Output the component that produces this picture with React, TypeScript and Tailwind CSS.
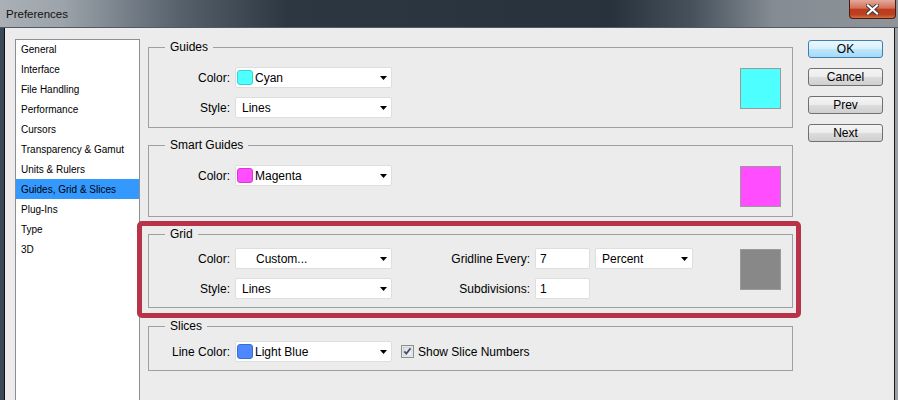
import React from "react";

const listItems = [
	"General",
	"Interface",
	"File Handling",
	"Performance",
	"Cursors",
	"Transparency & Gamut",
	"Units & Rulers",
	"Guides, Grid & Slices",
	"Plug-Ins",
	"Type",
	"3D",
];

function Arrow() {
	return (
		<svg width="7" height="4" viewBox="0 0 7 4" className="mr-[4px] ml-auto shrink-0">
			<path d="M0 0h7L3.5 4z" fill="#000" />
		</svg>
	);
}

function Select({
	className,
	swatch,
	text,
	indent,
}: {
	className: string;
	swatch?: string;
	text: string;
	indent?: boolean;
}) {
	return (
		<div
			className={`flex h-[21px] items-center rounded-[2px] border border-[#dedede] bg-white text-[12px] ${className}`}
		>
			{swatch ? (
				<>
					<span className={`ml-[1px] h-[15px] w-[16px] shrink-0 rounded-[3px] border ${swatch}`} />
					<span className="ml-[2px]">{text}</span>
				</>
			) : (
				<span className={indent ? "ml-[20px]" : "ml-[6px]"}>{text}</span>
			)}
			<Arrow />
		</div>
	);
}

function Input({ value }: { value: string }) {
	return (
		<div className="flex h-[21px] w-[55px] items-center rounded-[2px] border border-[#dedede] bg-white pl-[4px] text-[12px]">
			{value}
		</div>
	);
}

function Button({ label, primary }: { label: string; primary?: boolean }) {
	return (
		<div
			className={
				primary
					? "flex h-[18px] items-center justify-center rounded-[3px] border border-[#3c7fb1] bg-[linear-gradient(to_bottom,#eaf6fd_0%,#d9f0fc_50%,#bee6fd_50%,#a7d9f5_100%)] text-[12px] leading-none"
					: "flex h-[18px] items-center justify-center rounded-[3px] border border-[#707070] bg-[linear-gradient(to_bottom,#f4f4f4_0%,#ececec_50%,#dddddd_50%,#cfcfcf_100%)] text-[12px] leading-none"
			}
		>
			{label}
		</div>
	);
}

function Label({ children }: { children: React.ReactNode }) {
	return <span className="text-right text-[12px]">{children}</span>;
}

export default function App() {
	return (
		<div className="flex h-[400px] w-[898px] flex-col overflow-hidden bg-[#2f3b47] font-['Liberation_Sans',Arial,sans-serif] text-black">
			{/* title bar */}
			<div className="flex h-[28px] shrink-0 items-start border-b border-[#505a64] bg-[linear-gradient(to_right,#aab0b6_0%,#9ca3aa_7%,#56616c_20%,#2c3742_32%,#27323c_68%,#46515c_77%,#848b92_86%,#8e949a_100%)]">
				<span className="mt-[6px] pl-[6px] text-[11.5px] text-[#111]">Preferences</span>
				<div className="mr-[2px] ml-auto flex h-[19px] w-[47px] items-center justify-center rounded-b-[4px] border border-t-0 border-[#4a1a14] bg-[linear-gradient(to_bottom,#e4aa9c_0%,#d27058_45%,#c23a1e_52%,#b8401f_80%,#d2703f_100%)]">
					<svg width="13" height="11" viewBox="0 0 13 11">
						<path d="M2 1.5l9 8M11 1.5l-9 8" stroke="#3a3a3a" strokeWidth="4" strokeLinecap="square" />
						<path d="M2 1.5l9 8M11 1.5l-9 8" stroke="#fff" strokeWidth="2.2" strokeLinecap="square" />
					</svg>
				</div>
			</div>

			<div className="flex min-h-0 flex-1">
				<div className="w-[4px] shrink-0 bg-[#3b4857]" />
				<div className="w-[1px] shrink-0 bg-[#111]" />

				{/* client */}
				<div className="flex flex-1 bg-[#ececec] pt-[11px] pr-[11px] pl-[10px]">
					{/* category list */}
					<div className="h-[380px] w-[125px] shrink-0 border border-[#8a8f96] bg-white">
						<div className="-mt-[1px]">
							{listItems.map((item) => (
								<div
									key={item}
									className={`flex h-[20px] items-center pl-[5px] text-[10px] ${
										item === "Guides, Grid & Slices" ? "bg-[#3399ff]" : ""
									}`}
								>
									{item}
								</div>
							))}
						</div>
					</div>

					{/* settings */}
					<div className="ml-[8px] flex w-[645px] shrink-0 flex-col">
						<fieldset className="h-[89px] border border-[#a0a0a0]">
							<legend className="ml-[16px] px-[5px] text-[12px] leading-[16px]">Guides</legend>
							<div className="flex items-start pt-[12px]">
								<div className="grid grid-cols-[81px_157px] items-center gap-x-[5px] gap-y-[9px]">
									<Label>Color:</Label>
									<Select className="w-[157px]" swatch="bg-[#4dffff] border-[#3ad2d2]" text="Cyan" />
									<Label>Style:</Label>
									<Select className="w-[157px]" text="Lines" />
								</div>
								<div className="mt-[1px] mr-[11px] ml-auto h-[41px] w-[41px] border border-[#9a9a9a] bg-[#4dffff]" />
							</div>
						</fieldset>

						<fieldset className="mt-[9px] h-[80px] border border-[#a0a0a0]">
							<legend className="ml-[16px] px-[5px] text-[12px] leading-[16px]">Smart Guides</legend>
							<div className="flex items-start pt-[12px]">
								<div className="grid grid-cols-[81px_157px] items-center gap-x-[5px]">
									<Label>Color:</Label>
									<Select className="w-[157px]" swatch="bg-[#ff4dff] border-[#d23ad2]" text="Magenta" />
								</div>
								<div className="mt-[1px] mr-[11px] ml-auto h-[41px] w-[41px] border border-[#9a9a9a] bg-[#ff4dff]" />
							</div>
						</fieldset>

						{/* highlighted grid section */}
						<div className="mt-[4px] -mr-[8px] -ml-[11px] rounded-[5px] border-[5px] border-[#b8324a] pr-[3px] pb-[5px] pl-[6px]">
							<fieldset className="h-[82px] border border-[#a0a0a0]">
								<legend className="ml-[16px] px-[5px] text-[12px] leading-[16px]">Grid</legend>
								<div className="flex items-start pt-[6px]">
									<div className="grid grid-cols-[81px_157px_133px_55px_98px] items-center gap-x-[5px] gap-y-[9px]">
										<Label>Color:</Label>
										<Select className="w-[157px]" text="Custom..." indent />
										<Label>Gridline Every:</Label>
										<Input value="7" />
										<Select className="w-[98px]" text="Percent" />
										<Label>Style:</Label>
										<Select className="w-[157px]" text="Lines" />
										<Label>Subdivisions:</Label>
										<Input value="1" />
										<span />
									</div>
									<div className="mt-[1px] mr-[11px] ml-auto h-[41px] w-[41px] border border-[#9a9a9a] bg-[#888888]" />
								</div>
							</fieldset>
						</div>

						<fieldset className="h-[53px] border border-[#a0a0a0]">
							<legend className="ml-[16px] px-[5px] text-[12px] leading-[16px]">Slices</legend>
							<div className="flex items-center pt-[7px]">
								<span className="w-[81px] text-right text-[12px]">Line Color:</span>
								<Select className="ml-[5px] w-[157px]" swatch="bg-[#4d88ff] border-[#3a6cd6]" text="Light Blue" />
								<svg width="13" height="13" viewBox="0 0 13 13" className="ml-[9px]">
									<defs>
										<linearGradient id="cb" x1="0" y1="0" x2="1" y2="1">
											<stop offset="0" stopColor="#dcdcdc" />
											<stop offset="1" stopColor="#f8f8f8" />
										</linearGradient>
									</defs>
									<rect x="0.5" y="0.5" width="12" height="12" fill="#f4f4f4" stroke="#8e8f8f" />
									<rect x="2" y="2" width="9" height="9" fill="url(#cb)" stroke="#b8b8b8" strokeWidth="0.5" />
									<path d="M3.3 6.4l2 2.2 4.2-5.2" fill="none" stroke="#3f4f72" strokeWidth="1.7" />
								</svg>
								<span className="ml-[4px] text-[12px]">Show Slice Numbers</span>
							</div>
						</fieldset>
					</div>

					{/* buttons */}
					<div className="mt-[1px] ml-[15px] flex w-[75px] shrink-0 flex-col gap-[10px]">
						<Button label="OK" primary />
						<Button label="Cancel" />
						<Button label="Prev" />
						<Button label="Next" />
					</div>
				</div>

				<div className="w-[1px] shrink-0 bg-[#1a1a1a]" />
				<div className="w-[3px] shrink-0 bg-[#9aa0a6]" />
			</div>
		</div>
	);
}
